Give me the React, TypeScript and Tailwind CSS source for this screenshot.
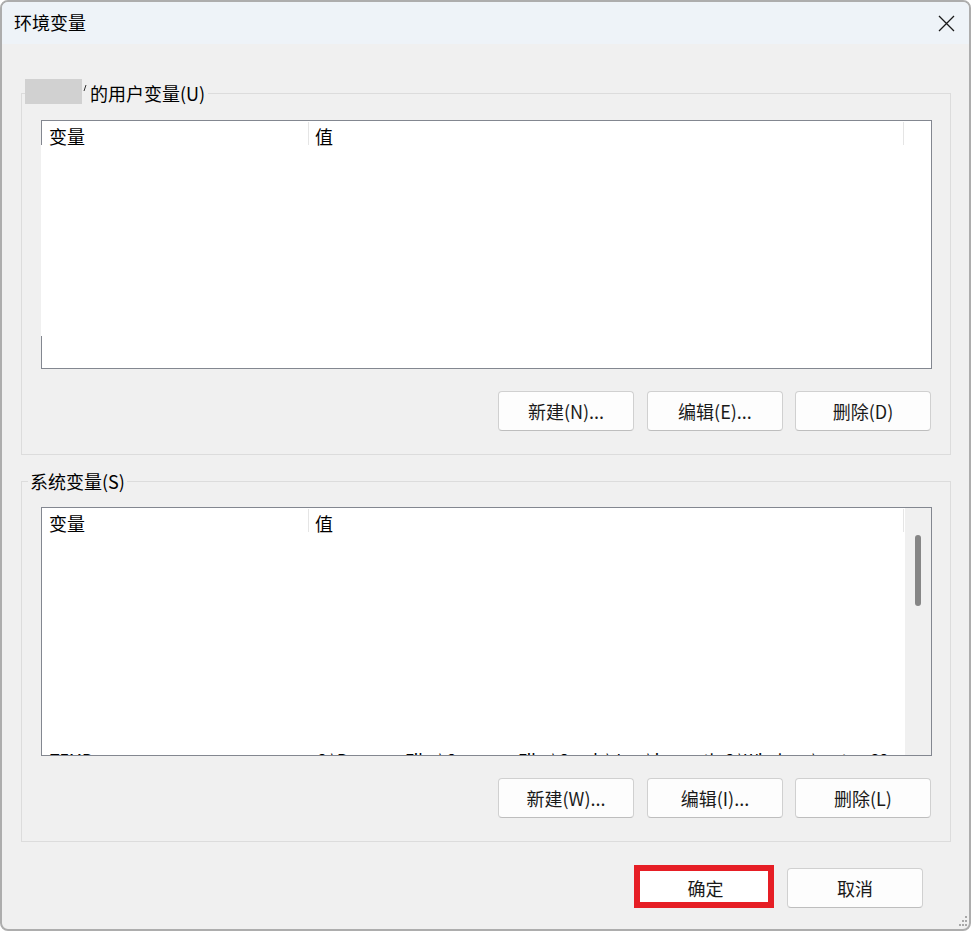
import React from "react";

function Btn({ label }: { label: string }) {
  return (
    <div className="w-[136px] h-[40px] rounded-[4px] border border-[#d0d0d0] border-b-[#bebebe] bg-[#fdfdfd] flex items-center justify-center text-[18px] leading-[24px] text-[#1a1a1a]">
      {label}
    </div>
  );
}

function Header() {
  return (
    <div className="h-[25px] flex bg-white text-[18px] leading-[20px] text-black shrink-0">
      <div className="w-[266px] pl-[7px] pt-[5px]">变量</div>
      <div className="w-px h-[23px] mt-[1px] bg-[#e5e5e5]" />
      <div className="w-[594px] pl-[6px] pt-[5px]">值</div>
      <div className="w-px h-[23px] mt-[1px] bg-[#e5e5e5]" />
    </div>
  );
}

export default function App() {
  return (
    <div className="w-[972px] h-[931px] bg-white font-['Noto_Sans_CJK_SC','Noto_Sans',sans-serif] text-black">
      <div className="relative w-[971px] h-[931px] rounded-[8px] border-2 border-[#adadad] bg-[#f0f0f0] overflow-hidden flex flex-col">
        {/* Title bar */}
        <div className="h-[42px] shrink-0 bg-[#eef3f8] flex items-center justify-between pl-[12px] pr-[14px]">
          <div className="text-[18px] leading-[24px] mb-[2px]">环境变量</div>
          <svg width="17" height="17" viewBox="0 0 17 17">
            <path d="M1 1L16 16M16 1L1 16" stroke="#1a1a1a" strokeWidth="1.3" fill="none" />
          </svg>
        </div>

        {/* Body */}
        <div className="pl-[19px] pt-[35px] flex flex-col">
          {/* User variables */}
          <fieldset className="w-[930px] border border-[#dcdcdc]">
            <legend className="ml-[3px] pr-[3px]">
              <div className="h-[28px] flex items-start text-[18px] leading-[28px]">
                <div className="w-[57px] h-[25px] bg-[#d1d1d1]" />
                <svg width="4" height="28" viewBox="0 0 4 28" className="ml-[1px]">
                  <path d="M3 6L1 12" stroke="#333" strokeWidth="1" fill="none" />
                </svg>
                <span className="ml-[3px]">的用户变量(U)</span>
              </div>
            </legend>
            <div className="pl-[19px] pr-[18px] pt-[13px] pb-[23px] flex flex-col">
              <div className="w-[891px] h-[249px] border-t border-r border-b border-[#838790] bg-white flex">
                <div className="w-px flex flex-col">
                  <div className="h-[24px] bg-[#838790]" />
                  <div className="flex-1 bg-white" />
                  <div className="h-[32px] bg-[#838790]" />
                </div>
                <div className="flex-1 flex flex-col">
                  <Header />
                </div>
              </div>
              <div className="mt-[22px] mr-[1px] flex justify-end gap-[12px]">
                <div className="mr-[1px]">
                  <Btn label="新建(N)..." />
                </div>
                <Btn label="编辑(E)..." />
                <Btn label="删除(D)" />
              </div>
            </div>
          </fieldset>

          {/* System variables */}
          <fieldset className="mt-[12px] w-[930px] border border-[#dcdcdc]">
            <legend className="ml-[6px] px-[2px]">
              <div className="h-[28px] flex items-start text-[18px] leading-[28px]">系统变量(S)</div>
            </legend>
            <div className="pl-[19px] pr-[18px] pt-[12px] pb-[23px] flex flex-col">
              <div className="w-[891px] h-[249px] border border-[#838790] bg-white flex">
                <div className="flex-1 min-w-0 flex flex-col">
                  <Header />
                  <div className="flex-1" />
                  <div className="h-[2px] overflow-hidden flex text-[16px] leading-[18px] whitespace-nowrap">
                    <div className="w-[267px] shrink-0 pl-[8px] -mt-[3px]">TEMP</div>
                    <div className="w-[580px] shrink-0 overflow-hidden pl-[7px] -mt-[3px]">
                      C:\Program Files\Common Files\Oracle\Java\javapath;C:\Windows\system32;C:\Windows
                    </div>
                  </div>
                </div>
                <div className="w-[26px] shrink-0 bg-[#f0f0f0] pl-[10px] pt-[27px]">
                  <div className="w-[6px] h-[71px] rounded-full bg-[#868686]" />
                </div>
              </div>
              <div className="mt-[22px] mr-[1px] flex justify-end gap-[12px]">
                <div className="mr-[1px]">
                  <Btn label="新建(W)..." />
                </div>
                <Btn label="编辑(I)..." />
                <Btn label="删除(L)" />
              </div>
            </div>
          </fieldset>

          {/* Dialog buttons */}
          <div className="mt-[23px] flex justify-end items-end gap-[13px] pr-[46px]">
            <div className="w-[140px] h-[43px] border-[6px] border-[#e61e25] bg-white flex items-center justify-center pl-[3px] pt-[3px] text-[18px] leading-[24px] text-[#1a1a1a]">
              确定
            </div>
            <Btn label="取消" />
          </div>
        </div>

        {/* Resize grip */}
        <svg width="12" height="12" viewBox="0 0 12 12" className="absolute right-[1px] bottom-[1px]">
          <rect x="9" y="0" width="2" height="2" fill="#a8a8a8" />
          <rect x="6" y="4" width="2" height="2" fill="#a8a8a8" />
          <rect x="9" y="4" width="2" height="2" fill="#a8a8a8" />
          <rect x="3" y="8" width="2" height="2" fill="#a8a8a8" />
          <rect x="6" y="8" width="2" height="2" fill="#a8a8a8" />
          <rect x="9" y="8" width="2" height="2" fill="#a8a8a8" />
        </svg>
      </div>
    </div>
  );
}
